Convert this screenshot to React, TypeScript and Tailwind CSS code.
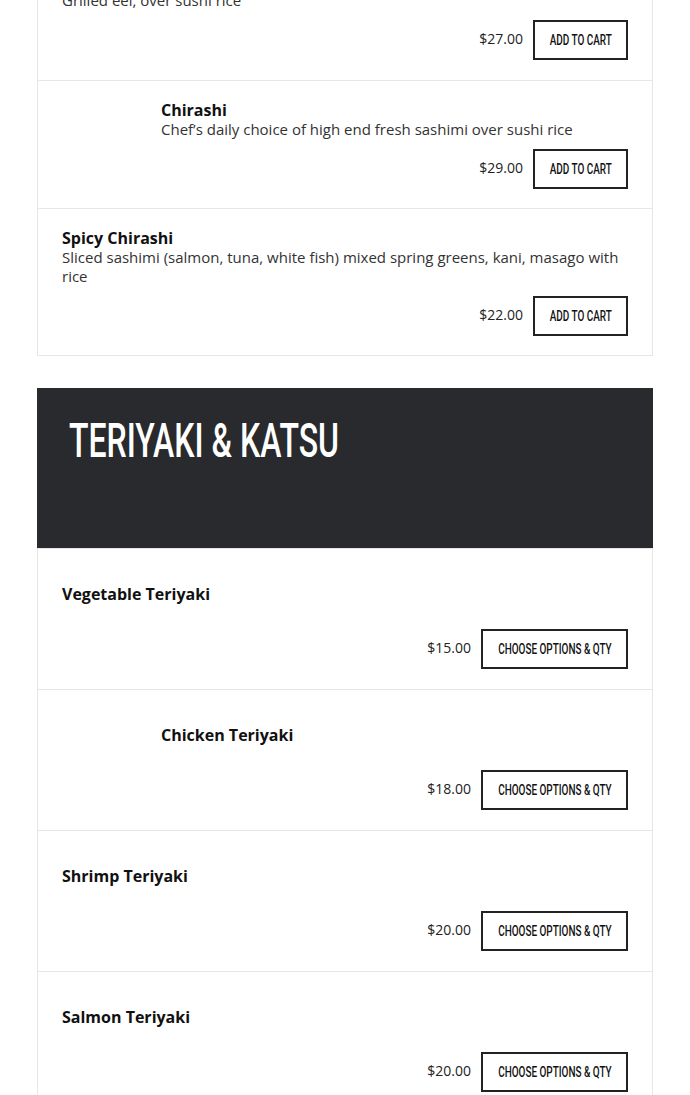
import React from "react";

type Item = {
  title: string;
  desc?: string;
  price: string;
  btn: "cart" | "options";
  indent?: boolean;
};

const sushi: Item[] = [
  { title: "Unagi Don", desc: "Grilled eel, over sushi rice", price: "$27.00", btn: "cart" },
  { title: "Chirashi", desc: "Chef’s daily choice of high end fresh sashimi over sushi rice", price: "$29.00", btn: "cart", indent: true },
  { title: "Spicy Chirashi", desc: "Sliced sashimi (salmon, tuna, white fish) mixed spring greens, kani, masago with rice", price: "$22.00", btn: "cart" },
];

const teriyaki: Item[] = [
  { title: "Vegetable Teriyaki", price: "$15.00", btn: "options" },
  { title: "Chicken Teriyaki", price: "$18.00", btn: "options", indent: true },
  { title: "Shrimp Teriyaki", price: "$20.00", btn: "options" },
  { title: "Salmon Teriyaki", price: "$20.00", btn: "options" },
];

const cond = "font-['Roboto',sans-serif]";

function Button({ kind }: { kind: "cart" | "options" }) {
  return (
    <button
      className={`flex h-[40px] items-center justify-center border-2 border-[#222] bg-white text-[14px] font-medium leading-none text-[#111] ${cond} ${
        kind === "cart" ? "w-[95px]" : "w-[147px]"
      }`}
    >
      <span className="inline-block scale-x-[0.71] whitespace-nowrap uppercase">
        {kind === "cart" ? "Add to Cart" : "Choose Options & Qty"}
      </span>
    </button>
  );
}

function Row({ item, variant, first }: { item: Item; variant: "sushi" | "teri"; first?: boolean }) {
  return (
    <div
      className={`${first ? "pb-5" : "border-t border-[#e6e6e6]"} px-6 ${
        variant === "sushi" ? `pt-5 ${first ? "" : "pb-[19px]"}` : "pt-[36px] pb-5"
      }`}
    >
      <div className="flex">
        {item.indent && <div className="w-[99px] shrink-0" />}
        <div className="min-w-0">
          <div className="text-[16px] font-bold leading-[19px] text-[#111]">{item.title}</div>
          {item.desc && <div className="text-[15px] leading-[19px] text-[#333]">{item.desc}</div>}
        </div>
      </div>
      <div className={`flex items-center justify-end gap-[10px] ${variant === "sushi" ? "mt-[10px]" : "mt-[25px]"}`}>
        <span className="mb-[3px] text-[14px] leading-[19px] text-[#222]">{item.price}</span>
        <Button kind={item.btn} />
      </div>
    </div>
  );
}

export default function App() {
  return (
    <div className="min-h-[1095px] overflow-hidden bg-white font-['Open_Sans',sans-serif]">
      <div className="mx-[37px] -mt-[48px] border-x border-b border-[#e6e6e6]">
        {sushi.map((it, i) => (
          <Row key={it.title} item={it} variant="sushi" first={i === 0} />
        ))}
      </div>
      <div className="mx-[37px] mt-[32px]">
        <div className="h-[160px] bg-[#282a2d] pl-8 pt-[28px]">
          <h2 className={`inline-block origin-left scale-x-[0.653] whitespace-nowrap text-[49px] font-medium leading-none text-white ${cond}`}>
            TERIYAKI &amp; KATSU
          </h2>
        </div>
        <div className="border-x border-[#e6e6e6]">
          {teriyaki.map((it) => (
            <Row key={it.title} item={it} variant="teri" />
          ))}
        </div>
      </div>
    </div>
  );
}
